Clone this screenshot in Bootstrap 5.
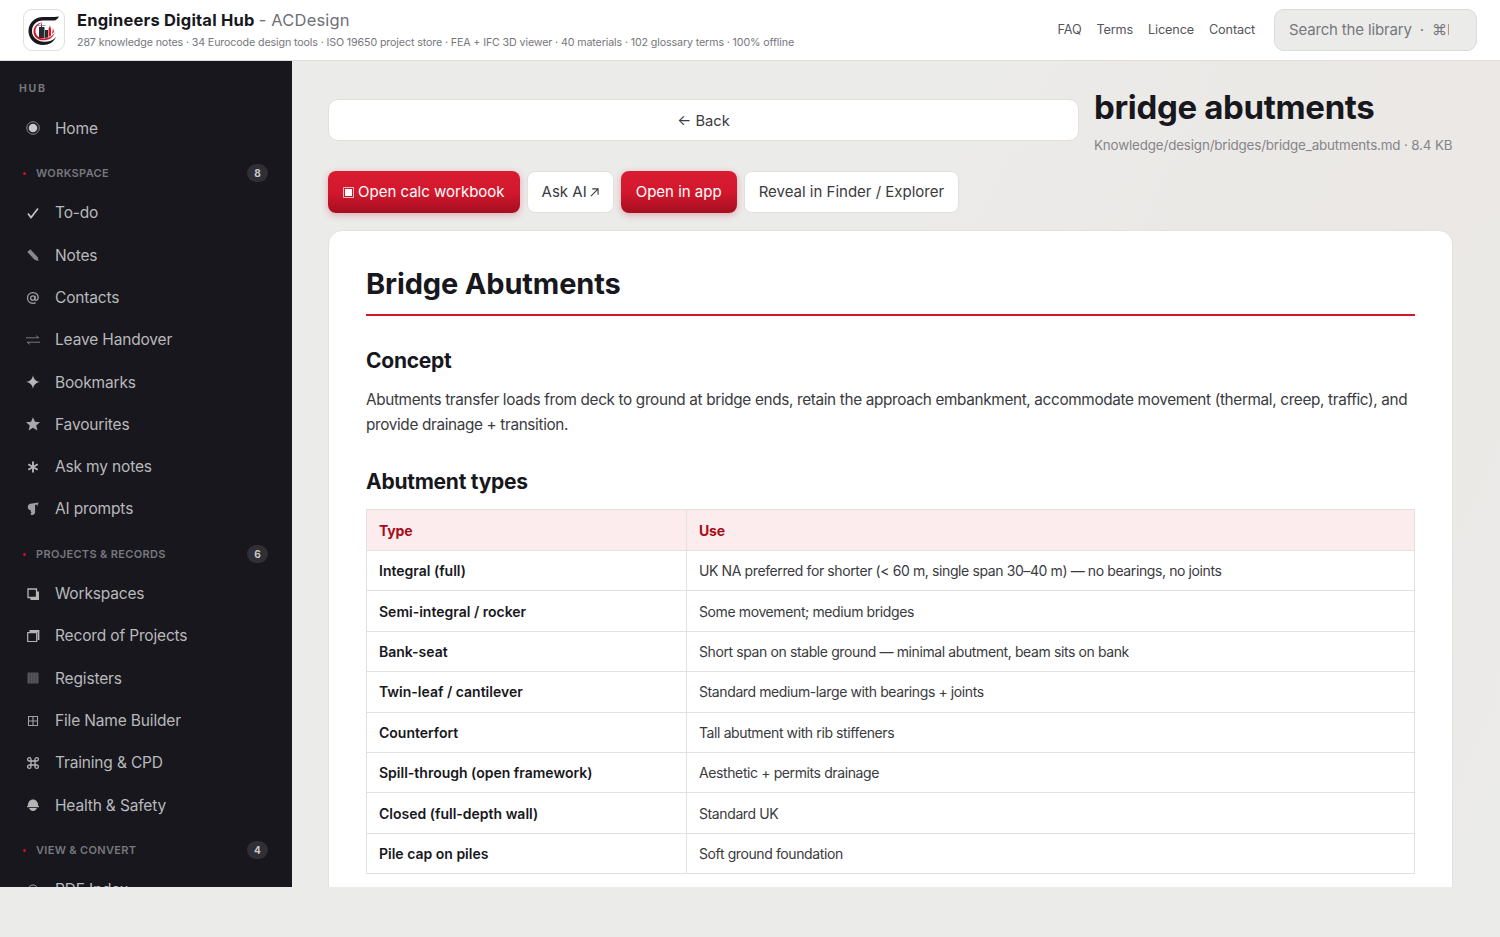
<!DOCTYPE html>
<html lang="en">
<head>
    <meta charset="UTF-8">
    <meta name="viewport" content="width=device-width, initial-scale=1.0">
    <title>Engineers Digital Hub - ACDesign</title>
    <link href="https://cdn.jsdelivr.net/npm/bootstrap@5.3.2/dist/css/bootstrap.min.css" rel="stylesheet">
    <style>
        body {
            font-family: Inter, "Noto Sans", sans-serif;
            background-color: #ebebe9;
            color: #17171d;
            margin: 0;
            letter-spacing: -0.01em;
        }

        .app-shell {
            height: 887px;
            overflow: hidden;
        }

        /* Top bar */
        .top-bar {
            height: 61px;
            padding: 0 23px;
            background-color: #fff;
            border-bottom: 1px solid #e0dedb;
        }

        .brand-logo {
            width: 42px;
            height: 42px;
            border: 1px solid #e2dfdc;
            border-radius: 9px;
            background-color: #fff;
            margin-right: 12px;
        }

        .brand-title {
            font-size: 16.5px;
            font-weight: 700;
            line-height: 20px;
            letter-spacing: 0.012em;
            margin-top: -1px;
        }

        .brand-title span {
            font-weight: 400;
            color: #6f6f76;
        }

        .brand-sub {
            font-size: 10.7px;
            line-height: 14px;
            color: #77777d;
            margin-top: 6px;
            letter-spacing: -0.012em;
        }

        .top-link {
            font-size: 12.7px;
            color: #55555c;
            text-decoration: none;
            margin-left: 15px;
        }

        .search-box {
            width: 203px;
            height: 42px;
            margin-left: 19px;
            padding-left: 14px;
            font-size: 15px;
            color: #77777d;
            background-color: #ebebe9;
            border: 1px solid #dcdbd8;
            border-radius: 10px;
            white-space: nowrap;
            overflow: hidden;
        }

        .search-box span {
            width: 160px;
            overflow: hidden;
        }

        /* Sidebar */
        .side-bar {
            width: 292px;
            flex: 0 0 292px;
            background-color: #17171d;
            overflow: hidden;
            padding: 22px 24px 0 19px;
        }

        .hub-label {
            font-size: 10.5px;
            font-weight: 700;
            letter-spacing: 0.16em;
            line-height: 12px;
            color: #77777d;
            margin-bottom: 12px;
        }

        .side-group {
            height: 18px;
            margin-top: 15px;
            margin-bottom: 9.5px;
            padding-left: 4px;
            font-size: 11px;
            font-weight: 600;
            letter-spacing: 0.03em;
            color: #77777d;
        }

        .side-group:first-of-type {
            margin-top: 15px;
        }

        .group-dot {
            width: 3px;
            height: 3px;
            border-radius: 50%;
            background-color: #c8102e;
            margin-right: 10px;
        }

        .group-count {
            width: 21px;
            height: 18px;
            border-radius: 9px;
            font-size: 10px;
            font-weight: 700;
            letter-spacing: 0;
            color: #c9c9cc;
            background-color: #2f2f35;
        }

        .side-item {
            height: 42.3px;
            font-size: 15.5px;
            color: #b9b9bc;
            text-decoration: none;
        }

        .side-item:hover {
            color: #fff;
        }

        .side-icon {
            width: 14px;
            height: 14px;
            margin-left: 7px;
            margin-right: 15px;
            color: #a0a0a4;
            flex: 0 0 14px;
        }

        /* Main area */
        .main-area {
            min-width: 0;
            padding: 38px 47px 0 36px;
            background: linear-gradient(115deg, #ebebe9 40%, #ebe8e5 75%, #ebebe9 100%);
            overflow: hidden;
        }

        .back-btn {
            height: 42px;
            padding-top: 8px;
            font-size: 14.7px;
            color: #3a3a40;
            background-color: #fff;
            border: 1px solid #e2e0dd;
            border-radius: 10px;
        }

        .page-title {
            width: 359px;
            margin-left: 15px;
            flex: 0 0 359px;
        }

        .page-title h1 {
            font-size: 33px;
            font-weight: 700;
            line-height: 40px;
            letter-spacing: -0.01em;
            margin: -12px 0 0;
        }

        .page-title p {
            font-size: 13.4px;
            line-height: 18px;
            color: #85858a;
            margin: 9px 0 1px;
            white-space: nowrap;
        }

        .action-row {
            gap: 7px;
            margin-top: 16px;
            margin-bottom: 17px;
        }

        .action-btn {
            height: 42px;
            padding: 0 14px;
            font-size: 15px;
            color: #3a3a40;
            background-color: #fff;
            border: 1px solid #e2e0dd;
            border-radius: 8px;
        }

        .action-primary {
            padding: 0 15px;
            color: #fff;
            background: linear-gradient(180deg, #d81b30 0%, #d3182d 50%, #a50e20 100%);
            border: 0;
            box-shadow: 0 2px 7px rgba(200, 16, 46, 0.3);
        }

        .action-primary:hover {
            color: #fff;
            background: #a50e20;
        }

        .ask-arrow {
            margin-left: 3px;
        }

        .doc-card {
            border: 1px solid #e4e2df;
            border-radius: 14px;
            padding: 36px 37px 40px;
        }

        .doc-card h2 {
            font-size: 29px;
            font-weight: 700;
            line-height: 34px;
            letter-spacing: -0.005em;
            padding-bottom: 13px;
            margin: 0 0 31px;
            border-bottom: 2px solid #d3182d;
        }

        .doc-card h3 {
            font-size: 21px;
            font-weight: 700;
            line-height: 28px;
            letter-spacing: -0.012em;
            margin: 0 0 12px;
        }

        .doc-card p {
            font-size: 15.3px;
            line-height: 25px;
            letter-spacing: -0.022em;
            color: #3a3a40;
            margin: 0 0 31px;
        }

        .doc-table {
            width: 100%;
            margin-top: 1px;
            table-layout: fixed;
            border-collapse: collapse;
            font-size: 14px;
            border: 1px solid #e4e2df;
        }

        .doc-table th,
        .doc-table td {
            height: 40.4px;
            padding: 0 12px;
            border: 1px solid #e4e2df;
        }

        .doc-table th {
            height: 41px;
            font-weight: 700;
            color: #a50e20;
            background-color: #fdeced;
        }

        .doc-table td {
            color: #3a3a40;
            letter-spacing: -0.028em;
        }

        .doc-table td:first-child {
            font-weight: 600;
            letter-spacing: 0;
            color: #17171d;
        }

        .first-col {
            width: 320px;
        }
    </style>
</head>
<body>
    <div class="app-shell d-flex flex-column">
        <!-- Top bar -->
        <header class="top-bar d-flex align-items-center flex-shrink-0">
            <div class="brand-logo d-flex align-items-center justify-content-center flex-shrink-0">
                <svg width="36" height="36" viewBox="0 0 36 36">
                    <path d="M33 4.500C28 5.300 22 5 17 5 9 5 2.500 11 2.500 19S9 33 17 33c6 0 11-3 13-8-3 3.500-7.500 5-12 4.800C11 29.500 6 25 6 19S10.500 8.500 17 8.500h11c2 0 4-1.700 5-4z" fill="#17171d"/>
                    <path d="M17 10.500C11 10.800 7.500 14.800 7.500 19.500c0 5.500 4.500 8.800 10 8.800 5 0 9.500-2.500 11.500-7.800-3 4-7 6.200-11.500 6C13 26.300 9.500 23.500 9.500 19c0-4 3-7.300 7.500-8.500z" fill="#d3182d"/>
                    <path d="M13 26V15h2v-3h1v3h2.500v11zM19 26v-8h3v7.500z" fill="#2a2a30"/>
                    <path d="M22.500 25v-8l1.500-3.500 1 3.500v6.500zM26 22l1-6 1 4z" fill="#d3182d"/>
                    <path d="M10.500 13.500h9M15.500 11v3" stroke="#77777d" stroke-width=".7" fill="none"/>
                </svg>
            </div>
            <div class="flex-grow-1">
                <div class="brand-title">Engineers Digital Hub <span>- ACDesign</span></div>
                <div class="brand-sub">287 knowledge notes · 34 Eurocode design tools · ISO 19650 project store · FEA + IFC 3D viewer · 40 materials · 102 glossary terms · 100% offline</div>
            </div>
            <nav class="d-flex align-items-center">
                <a class="top-link" href="#">FAQ</a>
                <a class="top-link" href="#">Terms</a>
                <a class="top-link" href="#">Licence</a>
                <a class="top-link" href="#">Contact</a>
            </nav>
            <div class="search-box d-flex align-items-center"><span>Search the library &nbsp;·&nbsp; ⌘K</span></div>
        </header>

        <div class="d-flex flex-grow-1 overflow-hidden">
            <!-- Sidebar -->
            <aside class="side-bar">
                <div class="hub-label">HUB</div>
                <a class="side-item d-flex align-items-center" href="#">
                    <svg class="side-icon" viewBox="0 0 14 14"><circle cx="7" cy="7" r="6.300" fill="none" stroke="currentColor" stroke-width=".8"/><circle cx="7" cy="7" r="4.300" fill="#c9c9cc"/></svg>Home</a>

                <div class="side-group d-flex align-items-center"><i class="group-dot"></i><span class="flex-grow-1">WORKSPACE</span><b class="group-count d-flex align-items-center justify-content-center">8</b></div>
                <a class="side-item d-flex align-items-center" href="#">
                    <svg class="side-icon" viewBox="0 0 14 14"><path d="M2 7.500l3 4L12 2.500" fill="none" stroke="#c2c2c5" stroke-width="1.700"/></svg>To-do</a>
                <a class="side-item d-flex align-items-center" href="#">
                    <svg class="side-icon" viewBox="0 0 14 14"><path d="M1.300 4L4.300 1.200l7.400 8 .9 3.900-4-1.300z" fill="#88888c"/></svg>Notes</a>
                <a class="side-item d-flex align-items-center" href="#">
                    <svg class="side-icon" viewBox="0 0 14 14"><path d="M9.200 9.300c1.700.4 3-.8 3-2.700C12.200 3.700 10 1.700 7 1.700c-3.200 0-5.500 2.400-5.500 5.400 0 3 2.300 5.200 5.400 5.200 1.100 0 2-.2 2.800-.7" fill="none" stroke="currentColor" stroke-width="1.300"/><circle cx="6.800" cy="7" r="2.200" fill="none" stroke="currentColor" stroke-width="1.300"/><path d="M9.100 4.700v4" stroke="currentColor" stroke-width="1.300"/></svg>Contacts</a>
                <a class="side-item d-flex align-items-center" href="#">
                    <svg class="side-icon" viewBox="0 0 14 14"><path d="M0 4.800h13M10 2.600l3 2.200M14 9.200H1M4 11.400L1 9.200" fill="none" stroke="#77777b" stroke-width="1"/></svg>Leave Handover</a>
                <a class="side-item d-flex align-items-center" href="#">
                    <svg class="side-icon" viewBox="0 0 14 14"><path d="M7 .3C7.800 4.300 9.700 6.200 13.700 7 9.700 7.800 7.800 9.700 7 13.700 6.200 9.700 4.300 7.800.3 7 4.300 6.200 6.200 4.300 7 .3z" fill="#b5b5b8"/></svg>Bookmarks</a>
                <a class="side-item d-flex align-items-center" href="#">
                    <svg class="side-icon" viewBox="0 0 14 14"><path d="M7 .2l2 4.600 5 .4-3.800 3.300 1.200 4.900L7 10.800l-4.400 2.600 1.200-4.900L0 5.200l5-.4z" fill="#a9a9ac"/></svg>Favourites</a>
                <a class="side-item d-flex align-items-center" href="#">
                    <svg class="side-icon" viewBox="0 0 14 14"><path d="M7 1.500v11M2.300 4.200l9.400 5.600M11.700 4.200l-9.400 5.600" stroke="#b5b5b8" stroke-width="1.900" fill="none"/></svg>Ask my notes</a>
                <a class="side-item d-flex align-items-center" href="#">
                    <svg class="side-icon" viewBox="0 0 14 14"><path d="M6 1.500C3.300 1.500 1.800 3 1.800 5c0 2 1.300 3.200 3.200 3.300-.7 1.200-.4 2.100.8 2.700-1.500 0-1.500 1.900 0 2 2.200.2 3.300-1.300 3.300-3V2.800h2.100V5l1.300-4.500z" fill="#a0a0a4"/></svg>AI prompts</a>

                <div class="side-group d-flex align-items-center"><i class="group-dot"></i><span class="flex-grow-1">PROJECTS &amp; RECORDS</span><b class="group-count d-flex align-items-center justify-content-center">6</b></div>
                <a class="side-item d-flex align-items-center" href="#">
                    <svg class="side-icon" viewBox="0 0 14 14"><path d="M2 2h8.500v8.500H2z" fill="none" stroke="#b5b5b8" stroke-width="1.300"/><path d="M12 4.500v7.500H4.500" fill="none" stroke="#b5b5b8" stroke-width="2"/></svg>Workspaces</a>
                <a class="side-item d-flex align-items-center" href="#">
                    <svg class="side-icon" viewBox="0 0 14 14"><path d="M1.700 3.700h9v8.800h-9z" fill="none" stroke="#b5b5b8" stroke-width="1.200"/><path d="M3.500 2h9v9" fill="none" stroke="#b5b5b8" stroke-width="1.800"/></svg>Record of Projects</a>
                <a class="side-item d-flex align-items-center" href="#">
                    <svg class="side-icon" viewBox="0 0 14 14"><path d="M1.500 1.500h11v11h-11z" fill="#56565b"/><path d="M4.200 1.500v11M7 1.500v11M9.800 1.500v11" stroke="#3a3a40" stroke-width=".7"/></svg>Registers</a>
                <a class="side-item d-flex align-items-center" href="#">
                    <svg class="side-icon" viewBox="0 0 14 14"><path d="M2.500 2.500h9v9h-9zM7 2.500v9M2.500 7h9" fill="none" stroke="currentColor" stroke-width="1.100"/></svg>File Name Builder</a>
                <a class="side-item d-flex align-items-center" href="#">
                    <svg class="side-icon" viewBox="0 0 14 14"><path d="M5 5h4v4H5zM5 5H3.300A1.700 1.700 0 1 1 5 3.300zM9 5V3.300A1.700 1.700 0 1 1 10.700 5zM9 9h1.700A1.700 1.700 0 1 1 9 10.700zM5 9v1.700A1.700 1.700 0 1 1 3.300 9z" fill="none" stroke="#b5b5b8" stroke-width="1.300"/></svg>Training &amp; CPD</a>
                <a class="side-item d-flex align-items-center" href="#">
                    <svg class="side-icon" viewBox="0 0 14 14"><path d="M1.800 8C1.800 4 4 1.500 7 1.500S12.200 4 12.200 8z" fill="#b5b5b8"/><path d="M1 8h12v1.200H1z" fill="#b5b5b8"/><path d="M3 10c.8 2 2.300 3 4 3s3.200-1 4-3z" fill="#b5b5b8"/></svg>Health &amp; Safety</a>

                <div class="side-group d-flex align-items-center"><i class="group-dot"></i><span class="flex-grow-1">VIEW &amp; CONVERT</span><b class="group-count d-flex align-items-center justify-content-center">4</b></div>
                <a class="side-item d-flex align-items-center" href="#">
                    <svg class="side-icon" viewBox="0 0 14 14"><circle cx="7" cy="7" r="5" fill="none" stroke="currentColor"/></svg>PDF Index</a>
            </aside>

            <!-- Main content -->
            <main class="main-area flex-grow-1">
                <div class="d-flex align-items-start">
                    <button type="button" class="btn back-btn flex-grow-1 d-flex align-items-center justify-content-center">← Back</button>
                    <div class="page-title">
                        <h1>bridge abutments</h1>
                        <p>Knowledge/design/bridges/bridge_abutments.md · 8.4 KB</p>
                    </div>
                </div>

                <div class="d-flex action-row align-items-center">
                    <button type="button" class="btn action-btn action-primary d-flex align-items-center">
                        <svg class="me-1" width="11" height="11" viewBox="0 0 11 11"><path d="M.5.500h10v10H.5z" fill="none" stroke="#fff" stroke-opacity=".7"/><path d="M2 2h7v7H2z" fill="#fff"/></svg>Open calc workbook</button>
                    <button type="button" class="btn action-btn d-flex align-items-center">Ask AI
                        <svg class="ask-arrow" width="9" height="9" viewBox="0 0 10 10"><path d="M1 9l7.500-7.500M2.500 1h6.500v6.500" fill="none" stroke="#3a3a40" stroke-width="1.200"/></svg></button>
                    <button type="button" class="btn action-btn action-primary">Open in app</button>
                    <button type="button" class="btn action-btn">Reveal in Finder / Explorer</button>
                </div>

                <article class="doc-card card">
                    <h2>Bridge Abutments</h2>
                    <h3>Concept</h3>
                    <p>Abutments transfer loads from deck to ground at bridge ends, retain the approach embankment, accommodate movement (thermal, creep, traffic), and provide drainage + transition.</p>
                    <h3>Abutment types</h3>
                    <table class="doc-table">
                        <colgroup><col class="first-col"><col></colgroup>
                        <thead>
                            <tr><th>Type</th><th>Use</th></tr>
                        </thead>
                        <tbody>
                            <tr><td>Integral (full)</td><td>UK NA preferred for shorter (&lt; 60 m, single span 30–40 m) — no bearings, no joints</td></tr>
                            <tr><td>Semi-integral / rocker</td><td>Some movement; medium bridges</td></tr>
                            <tr><td>Bank-seat</td><td>Short span on stable ground — minimal abutment, beam sits on bank</td></tr>
                            <tr><td>Twin-leaf / cantilever</td><td>Standard medium-large with bearings + joints</td></tr>
                            <tr><td>Counterfort</td><td>Tall abutment with rib stiffeners</td></tr>
                            <tr><td>Spill-through (open framework)</td><td>Aesthetic + permits drainage</td></tr>
                            <tr><td>Closed (full-depth wall)</td><td>Standard UK</td></tr>
                            <tr><td>Pile cap on piles</td><td>Soft ground foundation</td></tr>
                        </tbody>
                    </table>
                </article>
            </main>
        </div>
    </div>
    <script src="https://cdn.jsdelivr.net/npm/bootstrap@5.3.2/dist/js/bootstrap.bundle.min.js"></script>
</body>
</html>
